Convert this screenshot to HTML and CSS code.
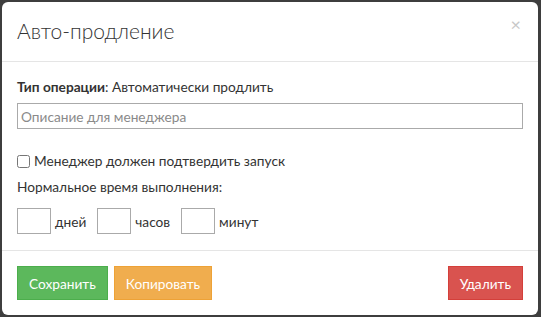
FILE: index.html
```html
<!DOCTYPE html>
<html lang="ru">
<head>
    <meta charset="UTF-8">
    <meta name="viewport" content="width=device-width, initial-scale=1.0">
    <title>Авто-продление</title>
    <link rel="stylesheet" href="styles.css">
</head>
<body>
    <div class="modal">
        <div class="modalHeader">
            <h4 class="modalTitle">Авто-продление</h4>
            <span class="closeBtn">&times;</span>
        </div>

        <div class="modalBody">
            <p class="opType"><strong>Тип операции</strong>: Автоматически продлить</p>
            <input type="text" class="descInput" placeholder="Описание для менеджера" autocomplete="off">

            <label class="checkRow">
                <input type="checkbox" class="confirmCheckbox">
                Менеджер должен подтвердить запуск
            </label>
            <p class="timeLabel">Нормальное время выполнения:</p>

            <div class="timeRow">
                <input type="text" class="timeInput"><span class="unit">дней</span>
                <input type="text" class="timeInput"><span class="unit">часов</span>
                <input type="text" class="timeInput"><span class="unit">минут</span>
            </div>
        </div>

        <div class="modalFooter">
            <button class="btn btnSave">Сохранить</button>
            <button class="btn btnCopy">Копировать</button>
            <button class="btn btnDelete">Удалить</button>
        </div>
    </div>
</body>
</html>
```

FILE: styles.css
```css
body {
    font-family: Lato, 'Open Sans', sans-serif;
    background-color: #3e3e3e;
    color: #333;
    margin: 0;
    padding: 0;
}

.modal {
    background-color: #fff;
    width: 536px;
    margin: 2px 0 0 2px;
    border-radius: 6px;
}

.modalHeader {
    display: flex;
    justify-content: space-between;
    align-items: flex-start;
    height: 59px;
    padding: 0 15px;
    border-bottom: 1px solid #e5e5e5;
}

.modalTitle {
    margin: 17px 0 0 0;
    font-size: 21px;
    font-weight: 300;
    line-height: 24px;
    color: #333;
}

.closeBtn {
    margin-top: 11px;
    margin-right: 2px;
    font-size: 18px;
    color: #c8c8c8;
}

.modalBody {
    padding: 15px 15px 16px 15px;
    display: flex;
    flex-direction: column;
    font-size: 13.7px;
}

.opType {
    margin: 0;
    line-height: 20px;
}

.descInput {
    margin-top: 6px;
    height: 26px;
    box-sizing: border-box;
    border: 1px solid #aaa;
    padding: 0 3px;
    font-family: inherit;
    font-size: 13.7px;
}

.descInput::placeholder {
    color: #8a8a8a;
}

.checkRow {
    display: flex;
    align-items: center;
    margin-top: 22px;
    line-height: 20px;
}

.confirmCheckbox {
    margin: 0 4px 0 0;
    width: 13px;
    height: 13px;
}

.timeLabel {
    margin: 6px 0 0 0;
    line-height: 20px;
}

.timeRow {
    display: flex;
    align-items: center;
    margin-top: 11px;
}

.timeInput {
    width: 34px;
    height: 26px;
    box-sizing: border-box;
    border: 1px solid #aaa;
    margin: 0;
}

.unit {
    margin: 0 11px 0 4px;
}

.modalFooter {
    display: flex;
    gap: 6px;
    padding: 15px;
    border-top: 1px solid #e5e5e5;
}

.btn {
    height: 34px;
    padding: 0 11px;
    border: 1px solid transparent;
    font-family: inherit;
    font-size: 13.7px;
    color: #fff;
    cursor: pointer;
}

.btnSave {
    background-color: #5cb85c;
    border-color: #4cae4c;
}

.btnCopy {
    background-color: #f0ad4e;
    border-color: #eea236;
}

.btnDelete {
    background-color: #d9534f;
    border-color: #d43f3a;
    margin-left: auto;
}
```
